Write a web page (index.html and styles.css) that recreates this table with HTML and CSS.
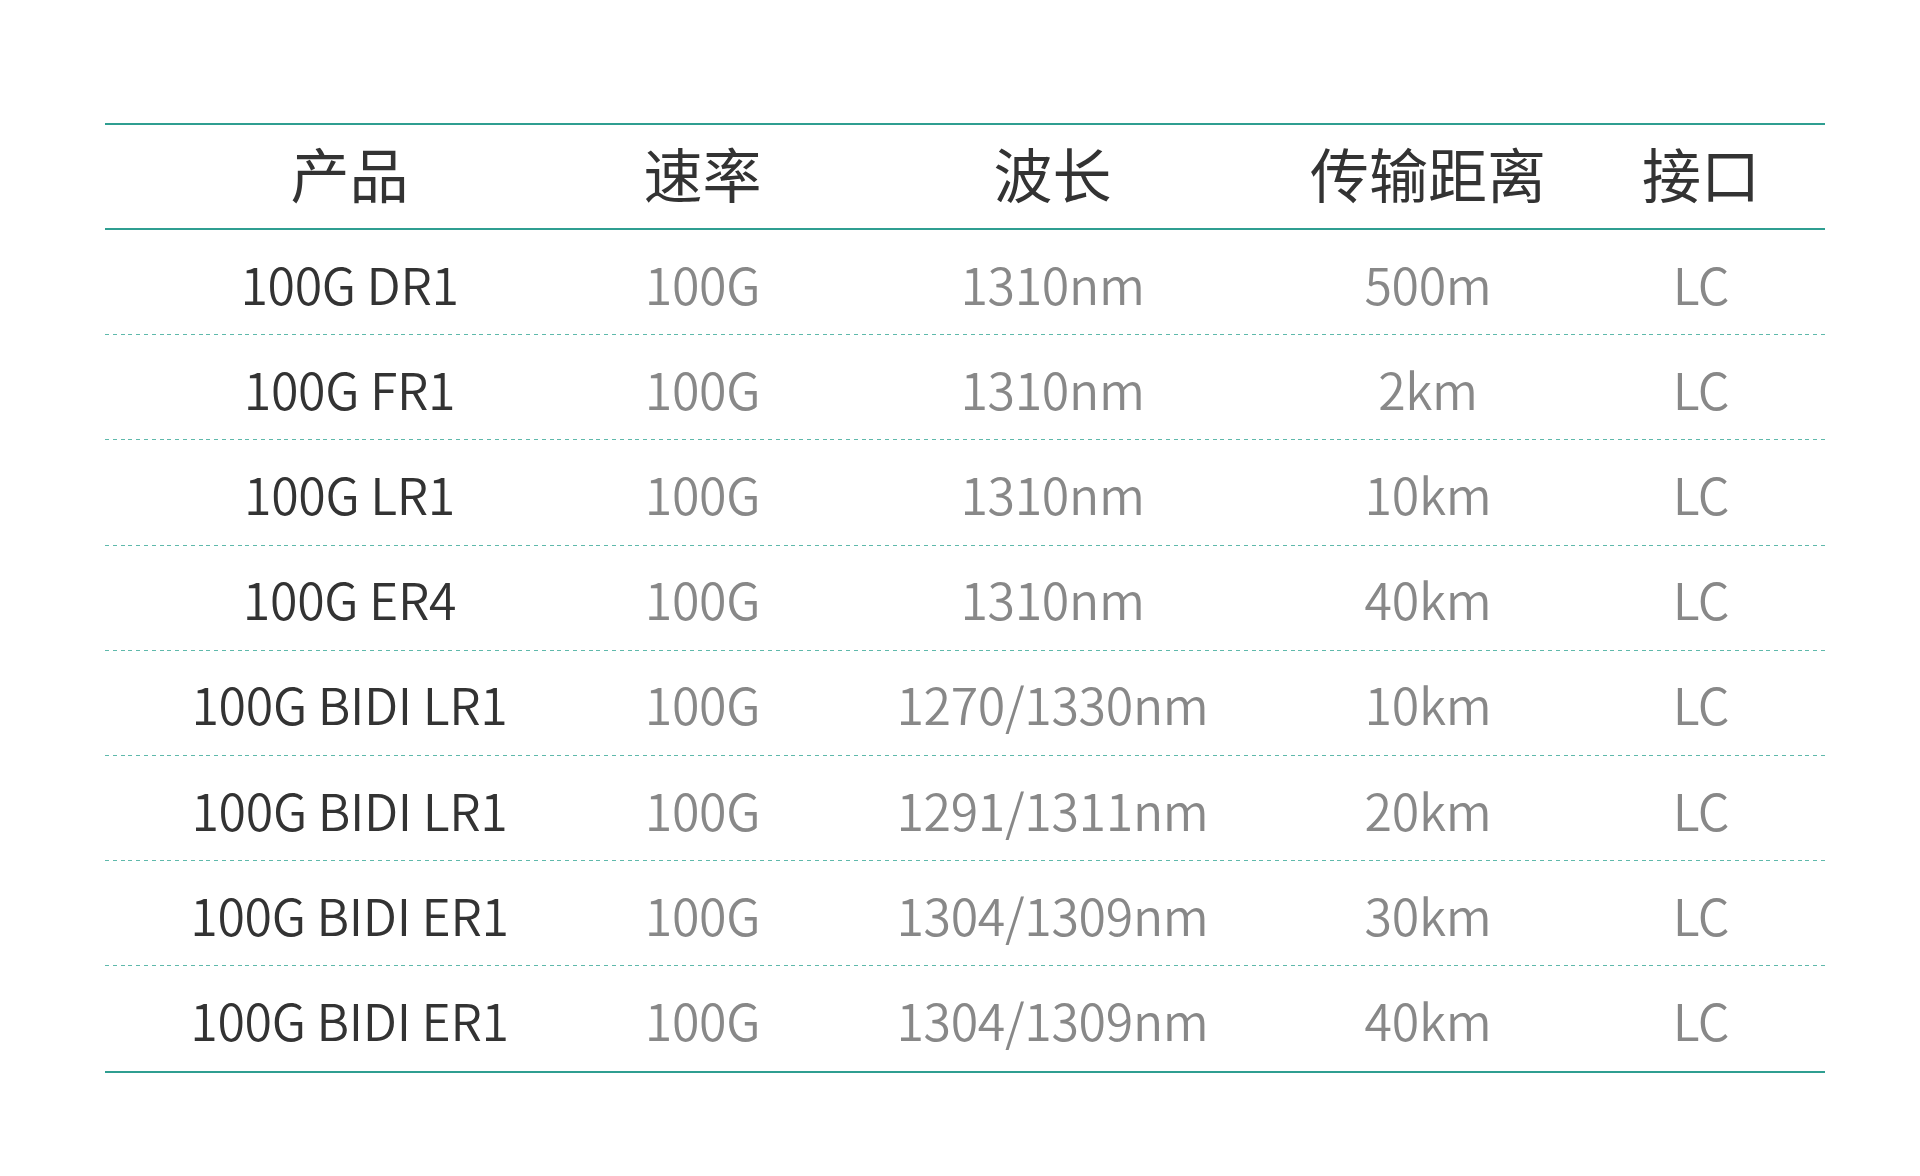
FILE: index.html
```html
<!DOCTYPE html>
<html lang="zh-CN">
<head>
<meta charset="utf-8">
<title>100G 光模块</title>
<link rel="stylesheet" href="styles.css">
</head>
<body>
<div class="page">
  <div class="spec">
    <div class="row head">
      <div class="cell c1">产品</div>
      <div class="cell c2">速率</div>
      <div class="cell c3">波长</div>
      <div class="cell c4">传输距离</div>
      <div class="cell c5">接口</div>
    </div>
    <div class="row">
      <div class="cell c1 name">100G DR1</div>
      <div class="cell c2">100G</div>
      <div class="cell c3">1310nm</div>
      <div class="cell c4">500m</div>
      <div class="cell c5">LC</div>
    </div>
    <div class="row">
      <div class="cell c1 name">100G FR1</div>
      <div class="cell c2">100G</div>
      <div class="cell c3">1310nm</div>
      <div class="cell c4">2km</div>
      <div class="cell c5">LC</div>
    </div>
    <div class="row">
      <div class="cell c1 name">100G LR1</div>
      <div class="cell c2">100G</div>
      <div class="cell c3">1310nm</div>
      <div class="cell c4">10km</div>
      <div class="cell c5">LC</div>
    </div>
    <div class="row">
      <div class="cell c1 name">100G ER4</div>
      <div class="cell c2">100G</div>
      <div class="cell c3">1310nm</div>
      <div class="cell c4">40km</div>
      <div class="cell c5">LC</div>
    </div>
    <div class="row">
      <div class="cell c1 name">100G BIDI LR1</div>
      <div class="cell c2">100G</div>
      <div class="cell c3">1270/1330nm</div>
      <div class="cell c4">10km</div>
      <div class="cell c5">LC</div>
    </div>
    <div class="row">
      <div class="cell c1 name">100G BIDI LR1</div>
      <div class="cell c2">100G</div>
      <div class="cell c3">1291/1311nm</div>
      <div class="cell c4">20km</div>
      <div class="cell c5">LC</div>
    </div>
    <div class="row">
      <div class="cell c1 name">100G BIDI ER1</div>
      <div class="cell c2">100G</div>
      <div class="cell c3">1304/1309nm</div>
      <div class="cell c4">30km</div>
      <div class="cell c5">LC</div>
    </div>
    <div class="row last">
      <div class="cell c1 name">100G BIDI ER1</div>
      <div class="cell c2">100G</div>
      <div class="cell c3">1304/1309nm</div>
      <div class="cell c4">40km</div>
      <div class="cell c5">LC</div>
    </div>
  </div>
</div>
</body>
</html>
```

FILE: styles.css
```css
html, body {
  margin: 0;
  padding: 0;
  background: #ffffff;
}

.page {
  padding: 123px 0 0 105px;
  font-family: "Noto Sans CJK SC", "Noto Sans", sans-serif;
}

.spec {
  width: 1720px;
}

.row {
  display: grid;
  grid-template-columns: 489px 217px 483px 268px 1fr;
  align-items: center;
  height: 104.2px;
  padding-bottom: 1px;
  background-image: repeating-linear-gradient(to right, #5fb9ab 0 4px, transparent 4px 7.8px);
  background-size: 100% 1px;
  background-position: left bottom;
  background-repeat: no-repeat;
}

.row.head {
  height: 103px;
  padding-bottom: 0;
  background: none;
  border-top: 2px solid #2f9e91;
  border-bottom: 2px solid #2f9e91;
}

.row.last {
  padding-bottom: 0;
  background: none;
  border-bottom: 2px solid #2f9e91;
}

.cell {
  text-align: center;
  font-size: 50px;
  font-weight: 350;
  line-height: 1;
  color: #888888;
  white-space: nowrap;
  padding-top: 1px;
  letter-spacing: -0.3px;
}

.cell.c5 {
  padding-left: 15px;
}

.row.head .cell {
  font-size: 59px;
  font-weight: 400;
  color: #333333;
  padding-top: 0;
  padding-bottom: 8px;
  letter-spacing: 0;
}

.cell.name {
  color: #333333;
}
```
